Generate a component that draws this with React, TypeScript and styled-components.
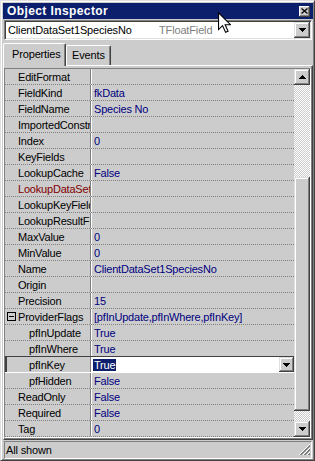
import React from 'react';
import styled, { createGlobalStyle } from 'styled-components';

const GlobalStyle = createGlobalStyle`
  html, body { margin: 0; padding: 0; background: #cccccc; }
  body {
    font-family: "Liberation Sans", Arial, sans-serif;
    font-size: 11px;
    color: #000;
  }
  * { box-sizing: border-box; }
`;

const FACE = '#cccccc';
const NAVY = '#0b1f6d';

const Window = styled.div`
  position: relative;
  width: 315px;
  height: 461px;
  background: ${FACE};
  border: 1px solid;
  border-color: #dfdfdf #404040 #404040 #dfdfdf;
  box-shadow: inset 1px 1px #fff, inset -1px -1px #808080;
  padding: 2px 1px 1px 2px;
  display: flex;
  flex-direction: column;
`;

const TitleBar = styled.div`
  height: 16px;
  flex: none;
  background: ${NAVY};
  display: flex;
  align-items: center;
  justify-content: space-between;
  padding: 0 3px 0 4px;
`;

const Title = styled.span`
  color: #fff;
  font-weight: bold;
  font-size: 12px;
  letter-spacing: 0.4px;
`;

const CloseButton = styled.div`
  width: 11px;
  height: 11px;
  background: ${FACE};
  box-shadow: inset -1px -1px #404040, inset 1px 1px #fff, inset -2px -2px #808080;
  display: flex;
  align-items: center;
  justify-content: center;
  padding: 0 1px 1px 0;
`;

const Combo = styled.div`
  flex: none;
  margin: 1px 1px 0 1px;
  height: 20px;
  background: #fff;
  border: 1px solid;
  border-color: #808080 #fff #fff #808080;
  box-shadow: inset 1px 1px #404040, inset -1px -1px #dfdfdf;
  padding: 1px;
  display: flex;
`;

const ComboText = styled.div`
  flex: 1;
  display: flex;
  align-items: center;
  padding-left: 2px;
  white-space: nowrap;
  letter-spacing: -0.15px;
`;

const ComboName = styled.span`
  width: 151px;
`;

const ComboType = styled.span`
  color: #808080;
`;

const DropButton = styled.div<{ $w: number }>`
  width: ${p => p.$w}px;
  flex: none;
  background: ${FACE};
  box-shadow: inset -1px -1px #404040, inset 1px 1px #dfdfdf, inset -2px -2px #808080, inset 2px 2px #fff;
  display: flex;
  align-items: center;
  justify-content: center;
`;

const TabRow = styled.div`
  flex: none;
  height: 23px;
  margin-top: 2px;
  display: flex;
  align-items: flex-end;
  position: relative;
  z-index: 1;
`;

const Tab = styled.div<{ $active?: boolean; $w: number }>`
  width: ${p => p.$w}px;
  height: ${p => (p.$active ? 23 : 20)}px;
  margin-bottom: ${p => (p.$active ? -1 : 0)}px;
  background: ${FACE};
  border-top: 1px solid #fff;
  border-left: 1px solid #fff;
  border-right: 1px solid #404040;
  box-shadow: inset -1px 0 #808080;
  border-radius: 2px 2px 0 0;
  display: flex;
  align-items: center;
  padding: ${p => (p.$active ? '0 0 2px 8px' : '0 0 1px 5px')};
  letter-spacing: -0.15px;
`;

const Panel = styled.div`
  flex: none;
  height: 375px;
  border-top: 1px solid #fff;
  border-left: 1px solid #fff;
  border-right: 1px solid #404040;
  border-bottom: 1px solid #404040;
  box-shadow: inset -1px -1px #808080;
  padding: 2px 1px 1px 0;
`;

const Grid = styled.div`
  height: 370px;
  display: flex;
  border: 1px solid;
  border-color: #808080 #fff #fff #808080;
`;

const Rows = styled.div`
  flex: 1;
  display: flex;
  flex-direction: column;
  overflow: hidden;
`;

const Row = styled.div<{ $selected?: boolean }>`
  position: relative;
  flex: none;
  height: 16px;
  display: flex;
  border-bottom: 1px ${p => (p.$selected ? 'solid #fff' : 'dotted #808080')};
  ${p =>
    p.$selected &&
    `&::before {
      content: '';
      position: absolute;
      left: 0;
      right: 0;
      top: -1px;
      height: 1px;
      background: #404040;
    }`}
`;

const NameCell = styled.div<{ $indent: number; $color: string; $selected?: boolean }>`
  width: 86px;
  flex: none;
  display: flex;
  align-items: center;
  padding-left: ${p => p.$indent}px;
  border-right: 1px solid #808080;
  white-space: nowrap;
  overflow: hidden;
  color: ${p => p.$color};
  letter-spacing: -0.2px;
  box-shadow: ${p => (p.$selected ? 'inset 2px 0 #404040' : 'none')};
`;

const ValueCell = styled.div`
  flex: 1;
  display: flex;
  align-items: center;
  padding-left: 2px;
  white-space: nowrap;
  overflow: hidden;
  color: #000080;
  border-left: 1px solid #fff;
  letter-spacing: -0.2px;
`;

const EditCell = styled.div`
  flex: 1;
  display: flex;
  background: #fff;
  border-left: 1px solid #fff;
`;

const EditText = styled.div`
  flex: 1;
  display: flex;
  align-items: center;
  padding-left: 1px;
  letter-spacing: -0.2px;
`;

const Highlight = styled.span`
  background: ${NAVY};
  color: #fff;
  padding: 0 1px;
  line-height: 12px;
`;

const ExpandBox = styled.span`
  width: 9px;
  height: 9px;
  flex: none;
  border: 1px solid #000;
  margin-right: 2px;
  display: flex;
  align-items: center;
  justify-content: center;
  &::after {
    content: '';
    width: 5px;
    height: 1px;
    background: #000;
  }
`;

const ScrollBar = styled.div`
  width: 16px;
  flex: none;
  display: flex;
  flex-direction: column;
`;

const ScrollButton = styled.div`
  height: 16px;
  flex: none;
  background: ${FACE};
  box-shadow: inset -1px -1px #404040, inset 1px 1px #dfdfdf, inset -2px -2px #808080, inset 2px 2px #fff;
  display: flex;
  align-items: center;
  justify-content: center;
`;

const Track = styled.div<{ $h: number }>`
  height: ${p => p.$h}px;
  flex: none;
  background: repeating-conic-gradient(#fff 0 25%, ${FACE} 0 50%) 0 0 / 2px 2px;
`;

const Thumb = styled.div<{ $h: number }>`
  height: ${p => p.$h}px;
  flex: none;
  background: ${FACE};
  box-shadow: inset -1px -1px #404040, inset 1px 1px #dfdfdf, inset -2px -2px #808080, inset 2px 2px #fff;
`;

const StatusBar = styled.div`
  flex: none;
  height: 18px;
  margin-top: 1px;
  padding: 0 1px;
  display: flex;
`;

const StatusPanel = styled.div`
  flex: 1;
  display: flex;
  align-items: center;
  justify-content: space-between;
  border: 1px solid;
  border-color: #808080 #fff #fff #808080;
  padding-left: 1px;
  letter-spacing: -0.15px;
`;

const Cursor = styled.svg`
  position: absolute;
  left: 217px;
  top: 11px;
`;

type Prop = {
  name: string;
  value?: string;
  sub?: boolean;
  reference?: boolean;
  expanded?: boolean;
  selected?: boolean;
};

const props: Prop[] = [
  { name: 'EditFormat' },
  { name: 'FieldKind', value: 'fkData' },
  { name: 'FieldName', value: 'Species No' },
  { name: 'ImportedConstraint' },
  { name: 'Index', value: '0' },
  { name: 'KeyFields' },
  { name: 'LookupCache', value: 'False' },
  { name: 'LookupDataSet', reference: true },
  { name: 'LookupKeyFields' },
  { name: 'LookupResultField' },
  { name: 'MaxValue', value: '0' },
  { name: 'MinValue', value: '0' },
  { name: 'Name', value: 'ClientDataSet1SpeciesNo' },
  { name: 'Origin' },
  { name: 'Precision', value: '15' },
  { name: 'ProviderFlags', value: '[pfInUpdate,pfInWhere,pfInKey]', expanded: true },
  { name: 'pfInUpdate', value: 'True', sub: true },
  { name: 'pfInWhere', value: 'True', sub: true },
  { name: 'pfInKey', value: 'True', sub: true, selected: true },
  { name: 'pfHidden', value: 'False', sub: true },
  { name: 'ReadOnly', value: 'False' },
  { name: 'Required', value: 'False' },
  { name: 'Tag', value: '0' },
];

const DownArrow = () => (
  <svg width="7" height="4" viewBox="0 0 7 4" shapeRendering="crispEdges">
    <polygon points="0,0 7,0 3.5,4" fill="#000" />
  </svg>
);

const UpArrow = () => (
  <svg width="7" height="4" viewBox="0 0 7 4" shapeRendering="crispEdges">
    <polygon points="0,4 7,4 3.5,0" fill="#000" />
  </svg>
);

export default function App() {
  return (
    <>
      <GlobalStyle />
      <Window>
        <TitleBar>
          <Title>Object Inspector</Title>
          <CloseButton>
            <svg width="7" height="6" viewBox="0 0 7 6">
              <path d="M0.5 0.5 L6.5 5.5 M6.5 0.5 L0.5 5.5" stroke="#000" strokeWidth="1.3" />
            </svg>
          </CloseButton>
        </TitleBar>

        <Combo>
          <ComboText>
            <ComboName>ClientDataSet1SpeciesNo</ComboName>
            <ComboType>TFloatField</ComboType>
          </ComboText>
          <DropButton $w={16}>
            <DownArrow />
          </DropButton>
        </Combo>

        <TabRow>
          <Tab $active $w={63}>Properties</Tab>
          <Tab $w={45}>Events</Tab>
        </TabRow>

        <Panel>
          <Grid>
            <Rows>
              {props.map(p => (
                <Row key={p.name} $selected={p.selected}>
                  <NameCell
                    $indent={p.sub ? 24 : p.expanded ? 2 : 13}
                    $color={p.reference ? '#800000' : '#000'}
                    $selected={p.selected}
                  >
                    {p.expanded && <ExpandBox />}
                    {p.name}
                  </NameCell>
                  {p.selected ? (
                    <EditCell>
                      <EditText>
                        <Highlight>{p.value}</Highlight>
                      </EditText>
                      <DropButton $w={15}>
                        <DownArrow />
                      </DropButton>
                    </EditCell>
                  ) : (
                    <ValueCell>{p.value}</ValueCell>
                  )}
                </Row>
              ))}
            </Rows>
            <ScrollBar>
              <ScrollButton>
                <UpArrow />
              </ScrollButton>
              <Track $h={92} />
              <Thumb $h={234} />
              <Track $h={10} />
              <ScrollButton>
                <DownArrow />
              </ScrollButton>
            </ScrollBar>
          </Grid>
        </Panel>

        <StatusBar>
          <StatusPanel>
            All shown
            <svg width="12" height="12" viewBox="0 0 12 12" shapeRendering="crispEdges">
              <path d="M11 1 L1 11 M11 5 L5 11 M11 9 L9 11" stroke="#808080" strokeWidth="1" />
              <path d="M11 2 L2 11 M11 6 L6 11 M11 10 L10 11" stroke="#808080" strokeWidth="1" />
              <path d="M11 0 L0 11 M11 4 L4 11 M11 8 L8 11" stroke="#fff" strokeWidth="1" />
            </svg>
          </StatusPanel>
        </StatusBar>

        <Cursor width="13" height="21" viewBox="0 0 12 19">
          <path
            d="M0.5 0.5 L0.5 16 L4.2 12.4 L7 18.5 L9.3 17.5 L6.6 11.5 L11.5 11.5 Z"
            fill="#fff"
            stroke="#000"
            strokeWidth="1"
            strokeLinejoin="miter"
          />
        </Cursor>
      </Window>
    </>
  );
}
